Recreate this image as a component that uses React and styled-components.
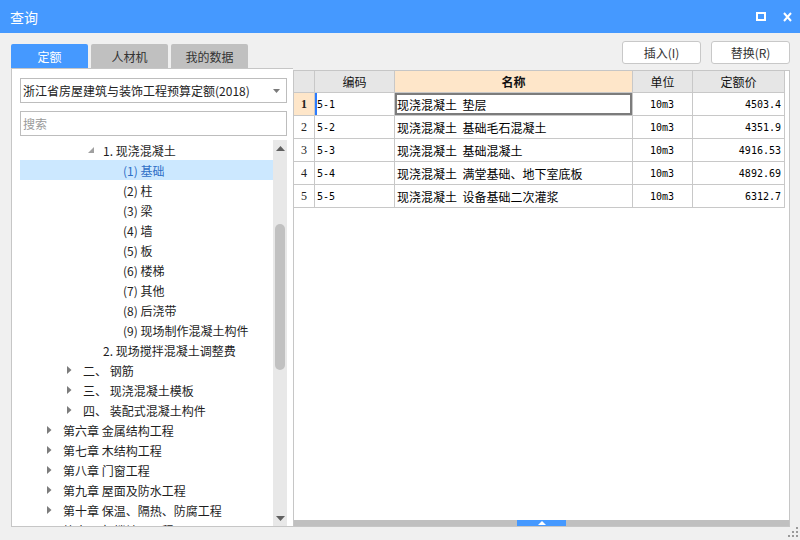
import React from "react"
import styled, { createGlobalStyle } from "styled-components"

const GlobalStyle = createGlobalStyle`
  html, body {
    margin: 0;
    padding: 0;
    background: #f0f0f0;
  }
  * {
    box-sizing: border-box;
  }
`

const UI_FONT = `"Noto Sans CJK SC", "Noto Sans", sans-serif`
const MONO_FONT = `"DejaVu Sans Mono", "Noto Sans CJK SC", monospace`

const Window = styled.div`
  width: 800px;
  height: 540px;
  display: flex;
  flex-direction: column;
  background: #f0f0f0;
  font-family: ${UI_FONT};
  overflow: hidden;
`

const TitleBar = styled.div`
  height: 33px;
  flex-shrink: 0;
  background: #4599ff;
  display: flex;
  align-items: center;
  justify-content: space-between;
  padding: 0 8px 0 10px;
  color: #fff;
`

const Title = styled.span`
  font-size: 14px;
  line-height: 16px;
`

const TitleIcons = styled.div`
  display: flex;
  align-items: center;
  gap: 17px;
`

const Body = styled.div`
  flex: 1;
  display: flex;
  padding: 0 10px 0 11px;
  min-height: 0;
`

const LeftColumn = styled.div`
  width: 282px;
  display: flex;
  flex-direction: column;
  padding-top: 11px;
`

const RightColumn = styled.div`
  flex: 1;
  display: flex;
  flex-direction: column;
  padding-top: 8px;
  min-width: 0;
`

const Tabs = styled.div`
  display: flex;
  gap: 3px;
  height: 24px;
`

const Tab = styled.div`
  width: 77px;
  border-radius: 2px 2px 0 0;
  background: ${p => (p.$active ? "#4599ff" : "#c0c0c0")};
  color: ${p => (p.$active ? "#fff" : "#333")};
  font-size: 12px;
  display: flex;
  align-items: center;
  justify-content: center;
`

const LeftPanel = styled.div`
  flex: 1;
  background: #fff;
  border: 1px solid #c6c6c6;
  border-right: none;
  display: flex;
  flex-direction: column;
  padding: 9px 6px 0 8px;
  min-height: 0;
`

const Select = styled.div`
  height: 25px;
  border: 1px solid #bdbdbd;
  display: flex;
  align-items: center;
  justify-content: space-between;
  padding: 0 6px 0 2px;
  font-size: 12px;
  color: #222;
`

const SearchBox = styled.div`
  height: 25px;
  margin-top: 8px;
  border: 1px solid #bdbdbd;
  display: flex;
  align-items: center;
  padding: 0 2px;
  font-size: 12px;
  color: #9a9a9a;
`

const TreeArea = styled.div`
  flex: 1;
  display: flex;
  margin-top: 4px;
  min-height: 0;
`

const TreeList = styled.div`
  flex: 1;
  overflow: hidden;
`

const TreeRow = styled.div`
  height: 20px;
  display: flex;
  align-items: center;
  padding-left: ${p => 27 + p.$level * 20}px;
  background: ${p => (p.$selected ? "#cce8ff" : "transparent")};
  color: ${p => (p.$selected ? "#2f6fc6" : "#1e1e1e")};
  font-size: 12px;
  white-space: nowrap;
`

const Toggle = styled.span`
  width: 16px;
  height: 20px;
  flex-shrink: 0;
  display: flex;
  align-items: center;
`

const Scrollbar = styled.div`
  width: 14px;
  background: #e8e8e8;
  display: flex;
  flex-direction: column;
  align-items: center;
`

const ScrollArrow = styled.div`
  height: 16px;
  flex-shrink: 0;
  display: flex;
  align-items: center;
  justify-content: center;
`

const Thumb = styled.div`
  width: 10px;
  height: 146px;
  margin-top: 68px;
  border-radius: 5px;
  background: #c1c1c1;
`

const Spacer = styled.div`
  flex: 1;
`

const ButtonRow = styled.div`
  display: flex;
  justify-content: flex-end;
  gap: 10px;
  height: 23px;
  margin-bottom: 6px;
`

const Button = styled.button`
  width: 79px;
  height: 23px;
  background: #fff;
  border: 1px solid #c8c8c8;
  border-radius: 3px;
  font-family: ${UI_FONT};
  font-size: 12px;
  color: #333;
  padding: 0;
`

const RightPanel = styled.div`
  flex: 1;
  background: #fff;
  border: 1px solid #c6c6c6;
  display: flex;
  flex-direction: column;
  min-height: 0;
`

const Grid = styled.div`
  display: grid;
  grid-template-columns: 21px 80px 238px 60px 92px;
  grid-template-rows: 22px;
  grid-auto-rows: 23px;
  width: max-content;
`

const HeadCell = styled.div`
  border-right: 1px solid #c8c8c8;
  border-bottom: 1px solid #c8c8c8;
  background: ${p => (p.$accent ? "#fee6c9" : "#e6e6e6")};
  font-size: 12px;
  font-weight: ${p => (p.$accent ? 700 : 400)};
  color: #111;
  display: flex;
  align-items: center;
  justify-content: center;
`

const RowNum = styled.div`
  border-right: 1px solid #c8c8c8;
  border-bottom: 1px solid #c8c8c8;
  background: ${p => (p.$selected ? "#fee6c9" : "#fff")};
  font-family: "Liberation Serif", "DejaVu Serif", serif;
  font-size: 12px;
  font-weight: ${p => (p.$selected ? 700 : 400)};
  color: #222;
  display: flex;
  align-items: center;
  justify-content: center;
`

const Cell = styled.div`
  border-right: 1px solid #c8c8c8;
  border-bottom: 1px solid #c8c8c8;
  display: flex;
  align-items: center;
  justify-content: ${p => p.$align || "flex-start"};
  padding: 0 3px 0 2px;
  font-family: ${p => (p.$mono ? MONO_FONT : UI_FONT)};
  font-size: ${p => (p.$mono ? "10px" : "12px")};
  color: #000;
  white-space: pre;
  box-shadow: ${p =>
    p.$focus ? "inset 0 0 0 2px #7c7c7c" : p.$marker ? "inset 2px 0 0 #2b7bff" : "none"};
`

const BottomBar = styled.div`
  margin-top: auto;
  height: 6px;
  background: #c0c0c0;
  display: flex;
  justify-content: center;
`

const Collapser = styled.div`
  width: 49px;
  background: #4599ff;
  display: flex;
  align-items: center;
  justify-content: center;
`

const Footer = styled.div`
  height: 13px;
  flex-shrink: 0;
  display: flex;
  justify-content: flex-end;
  align-items: flex-end;
  padding: 0 2px 3px 0;
`

const tree = [
  { level: 2, text: "1. 现浇混凝土", toggle: "open" },
  { level: 3, text: "(1) 基础", selected: true },
  { level: 3, text: "(2) 柱" },
  { level: 3, text: "(3) 梁" },
  { level: 3, text: "(4) 墙" },
  { level: 3, text: "(5) 板" },
  { level: 3, text: "(6) 楼梯" },
  { level: 3, text: "(7) 其他" },
  { level: 3, text: "(8) 后浇带" },
  { level: 3, text: "(9) 现场制作混凝土构件" },
  { level: 2, text: "2. 现场搅拌混凝土调整费" },
  { level: 1, text: "二、 钢筋", toggle: "closed" },
  { level: 1, text: "三、 现浇混凝土模板", toggle: "closed" },
  { level: 1, text: "四、 装配式混凝土构件", toggle: "closed" },
  { level: 0, text: "第六章 金属结构工程", toggle: "closed" },
  { level: 0, text: "第七章 木结构工程", toggle: "closed" },
  { level: 0, text: "第八章 门窗工程", toggle: "closed" },
  { level: 0, text: "第九章 屋面及防水工程", toggle: "closed" },
  { level: 0, text: "第十章 保温、隔热、防腐工程", toggle: "closed" },
  { level: 0, text: "第十一章 楼地面工程", toggle: "closed" },
]

const rows = [
  { code: "5-1", name: "现浇混凝土  垫层", unit: "10m3", price: "4503.4" },
  { code: "5-2", name: "现浇混凝土  基础毛石混凝土", unit: "10m3", price: "4351.9" },
  { code: "5-3", name: "现浇混凝土  基础混凝土", unit: "10m3", price: "4916.53" },
  { code: "5-4", name: "现浇混凝土  满堂基础、地下室底板", unit: "10m3", price: "4892.69" },
  { code: "5-5", name: "现浇混凝土  设备基础二次灌浆", unit: "10m3", price: "6312.7" },
]

const ToggleIcon = ({ type }) => {
  if (type === "open") {
    return (
      <svg width="7" height="7" viewBox="0 0 7 7" style={{ marginLeft: 1 }}>
        <polygon points="6,0 6,6 0,6" fill="#a0a0a0" />
      </svg>
    )
  }
  if (type === "closed") {
    return (
      <svg width="5" height="8" viewBox="0 0 5 8">
        <polygon points="0,0 4.5,4 0,8" fill="#7c7c7c" />
      </svg>
    )
  }
  return null
}

const App = () => {
  return (
    <Window>
      <GlobalStyle />
      <TitleBar>
        <Title>查询</Title>
        <TitleIcons>
          <svg width="10" height="9" viewBox="0 0 10 9">
            <rect x="1" y="1" width="8" height="7" fill="none" stroke="#fff" strokeWidth="2" />
          </svg>
          <svg width="9" height="10" viewBox="0 0 9 10">
            <path d="M1 1 L8 9 M8 1 L1 9" stroke="#fff" strokeWidth="2" />
          </svg>
        </TitleIcons>
      </TitleBar>

      <Body>
        <LeftColumn>
          <Tabs>
            <Tab $active>定额</Tab>
            <Tab>人材机</Tab>
            <Tab>我的数据</Tab>
          </Tabs>
          <LeftPanel>
            <Select>
              <span>浙江省房屋建筑与装饰工程预算定额(2018)</span>
              <svg width="7" height="4" viewBox="0 0 7 4">
                <polygon points="0,0 7,0 3.5,4" fill="#7a7a7a" />
              </svg>
            </Select>
            <SearchBox>搜索</SearchBox>
            <TreeArea>
              <TreeList>
                {tree.map((item, i) => (
                  <TreeRow key={i} $level={item.level} $selected={item.selected}>
                    <Toggle>
                      <ToggleIcon type={item.toggle} />
                    </Toggle>
                    {item.text}
                  </TreeRow>
                ))}
              </TreeList>
              <Scrollbar>
                <ScrollArrow>
                  <svg width="9" height="5" viewBox="0 0 9 5">
                    <polygon points="0,5 9,5 4.5,0" fill="#606060" />
                  </svg>
                </ScrollArrow>
                <Thumb />
                <Spacer />
                <ScrollArrow>
                  <svg width="9" height="5" viewBox="0 0 9 5">
                    <polygon points="0,0 9,0 4.5,5" fill="#606060" />
                  </svg>
                </ScrollArrow>
              </Scrollbar>
            </TreeArea>
          </LeftPanel>
        </LeftColumn>

        <RightColumn>
          <ButtonRow>
            <Button>插入(I)</Button>
            <Button>替换(R)</Button>
          </ButtonRow>
          <RightPanel>
            <Grid>
              <HeadCell />
              <HeadCell>编码</HeadCell>
              <HeadCell $accent>名称</HeadCell>
              <HeadCell>单位</HeadCell>
              <HeadCell>定额价</HeadCell>
              {rows.map((row, i) => (
                <React.Fragment key={row.code}>
                  <RowNum $selected={i === 0}>{i + 1}</RowNum>
                  <Cell $mono $marker={i === 0}>{row.code}</Cell>
                  <Cell $focus={i === 0}>{row.name}</Cell>
                  <Cell $mono $align="center">{row.unit}</Cell>
                  <Cell $mono $align="flex-end">{row.price}</Cell>
                </React.Fragment>
              ))}
            </Grid>
            <BottomBar>
              <Collapser>
                <svg width="8" height="4" viewBox="0 0 8 4">
                  <polygon points="0,4 8,4 4,0" fill="#fff" />
                </svg>
              </Collapser>
            </BottomBar>
          </RightPanel>
        </RightColumn>
      </Body>

      <Footer>
        <svg width="10" height="10" viewBox="0 0 10 10">
          <rect x="8" y="0" width="2" height="2" fill="#9a9a9a" />
          <rect x="4" y="4" width="2" height="2" fill="#9a9a9a" />
          <rect x="8" y="4" width="2" height="2" fill="#9a9a9a" />
          <rect x="0" y="8" width="2" height="2" fill="#9a9a9a" />
          <rect x="4" y="8" width="2" height="2" fill="#9a9a9a" />
          <rect x="8" y="8" width="2" height="2" fill="#9a9a9a" />
        </svg>
      </Footer>
    </Window>
  )
}

export default App
